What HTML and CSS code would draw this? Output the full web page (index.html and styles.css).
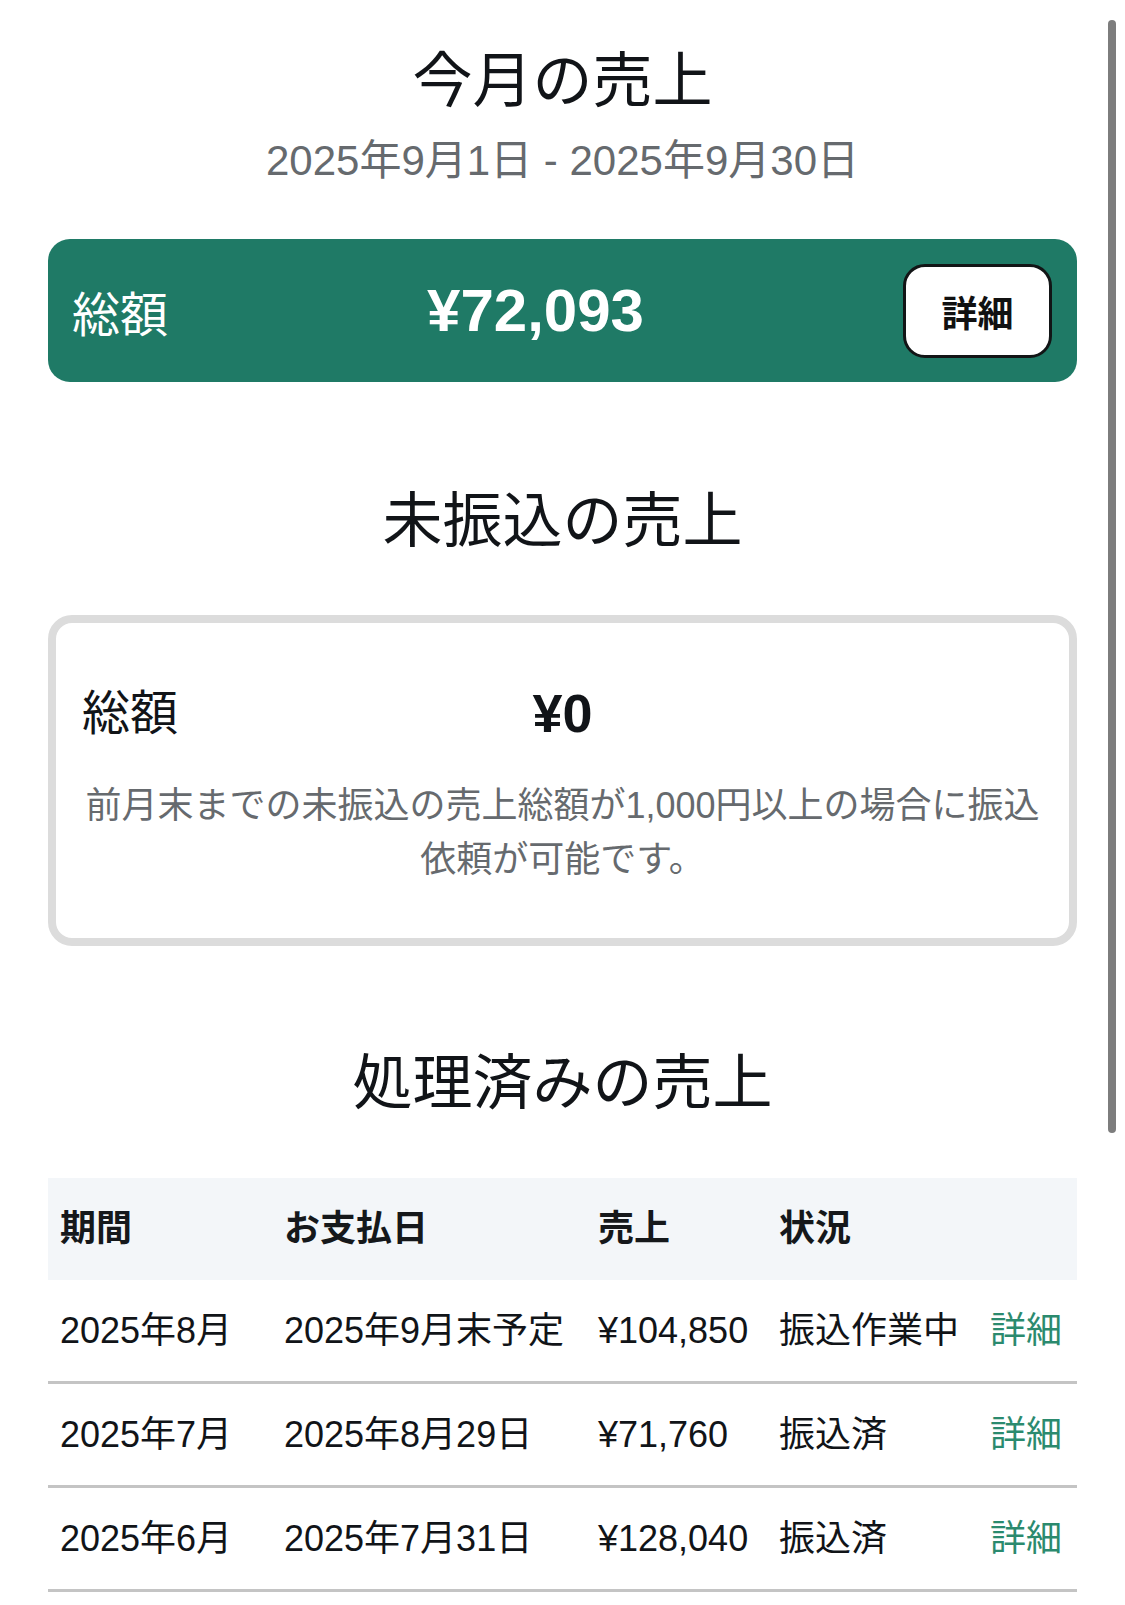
FILE: index.html
```html
<!DOCTYPE html>
<html lang="ja">
<head>
    <meta charset="utf-8">
    <title>売上</title>
    <link rel="stylesheet" href="styles.css">
</head>
<body>
    <div class="scroll-indicator"></div>

    <div class="page">
        <section class="section first">
            <h1 class="section-title">今月の売上</h1>
            <p class="period">2025年9月1日 - 2025年9月30日</p>

            <div class="total-card">
                <span class="total-label">総額</span>
                <span class="total-amount">¥72,093</span>
                <button class="detail-button">詳細</button>
            </div>
        </section>

        <section class="section">
            <h2 class="section-title">未振込の売上</h2>

            <div class="pending-card">
                <div class="pending-row">
                    <span class="pending-label">総額</span>
                    <span class="pending-amount">¥0</span>
                    <span></span>
                </div>
                <p class="pending-note">前月末までの未振込の売上総額が1,000円以上の場合に振込依頼が可能です。</p>
            </div>
        </section>

        <section class="section last">
            <h2 class="section-title">処理済みの売上</h2>

            <table class="sales-table">
                <thead>
                    <tr>
                        <th class="col-period">期間</th>
                        <th class="col-date">お支払日</th>
                        <th class="col-amount">売上</th>
                        <th class="col-status">状況</th>
                        <th class="col-link"></th>
                    </tr>
                </thead>
                <tbody>
                    <tr>
                        <td>2025年8月</td>
                        <td>2025年9月末予定</td>
                        <td>¥104,850</td>
                        <td>振込作業中</td>
                        <td><a href="#" class="detail-link">詳細</a></td>
                    </tr>
                    <tr>
                        <td>2025年7月</td>
                        <td>2025年8月29日</td>
                        <td>¥71,760</td>
                        <td>振込済</td>
                        <td><a href="#" class="detail-link">詳細</a></td>
                    </tr>
                    <tr>
                        <td>2025年6月</td>
                        <td>2025年7月31日</td>
                        <td>¥128,040</td>
                        <td>振込済</td>
                        <td><a href="#" class="detail-link">詳細</a></td>
                    </tr>
                </tbody>
            </table>
        </section>
    </div>
</body>
</html>
```

FILE: styles.css
```css
body {
    margin: 0;
    background: #ffffff;
    color: #111418;
    font-family: "Liberation Sans", "Noto Sans CJK JP", sans-serif;
}

.page {
    padding: 37px 48px 0;
}

.section {
    margin-top: 95px;
}

.section.first {
    margin-top: 0;
}

.section.last {
    margin-top: 93px;
}

.section-title {
    margin: 0;
    font-size: 60px;
    line-height: 90px;
    font-weight: 400;
    text-align: center;
}

.period {
    margin: 2px 0 0;
    font-size: 42px;
    line-height: 63px;
    color: #666a6e;
    text-align: center;
}

/* This month's total */
.total-card {
    margin-top: 47px;
    height: 143px;
    box-sizing: border-box;
    padding: 0 25px 0 24px;
    display: flex;
    justify-content: space-between;
    align-items: center;
    background: #1f7a66;
    border-radius: 22px;
    color: #ffffff;
}

.total-label {
    font-size: 48px;
}

.total-amount {
    font-size: 60px;
    font-weight: 700;
}

.detail-button {
    width: 149px;
    height: 94px;
    background: #ffffff;
    border: 3px solid #121516;
    border-radius: 22px;
    font-family: inherit;
    font-size: 36px;
    font-weight: 700;
    color: #111;
    padding: 0;
}

/* Pending sales */
.pending-card {
    margin-top: 48px;
    border: 8px solid #dcdcdc;
    border-radius: 24px;
    padding: 50px 24px 51px;
}

.pending-row {
    display: grid;
    grid-template-columns: 1fr auto 1fr;
    align-items: center;
    line-height: 81px;
}

.pending-label {
    font-size: 48px;
    padding-left: 2px;
}

.pending-amount {
    font-size: 54px;
    font-weight: 700;
}

.pending-note {
    margin: 25px 0 0;
    font-size: 36px;
    line-height: 54px;
    color: #666a6e;
    text-align: center;
}

/* Processed sales table */
.sales-table {
    margin-top: 49px;
    width: 100%;
    border-collapse: collapse;
    table-layout: fixed;
    font-size: 36px;
}

.sales-table th,
.sales-table td {
    padding: 0 0 0 12px;
    text-align: left;
    white-space: nowrap;
    line-height: 54px;
}

.sales-table thead tr {
    background: #f3f6f9;
}

.sales-table th {
    height: 102px;
    font-weight: 700;
    color: #15181b;
}

.sales-table td {
    height: 101px;
    border-bottom: 3px solid #c4c4c4;
}

.col-period { width: 212px; }
.col-date { width: 302px; }
.col-amount { width: 169px; }
.col-status { width: 199px; }

.detail-link {
    color: #2b8a6e;
    text-decoration: none;
}

.scroll-indicator {
    position: absolute;
    top: 20px;
    left: 1108px;
    width: 8px;
    height: 1113px;
    border-radius: 4px;
    background: #7d7d7d;
}
```
